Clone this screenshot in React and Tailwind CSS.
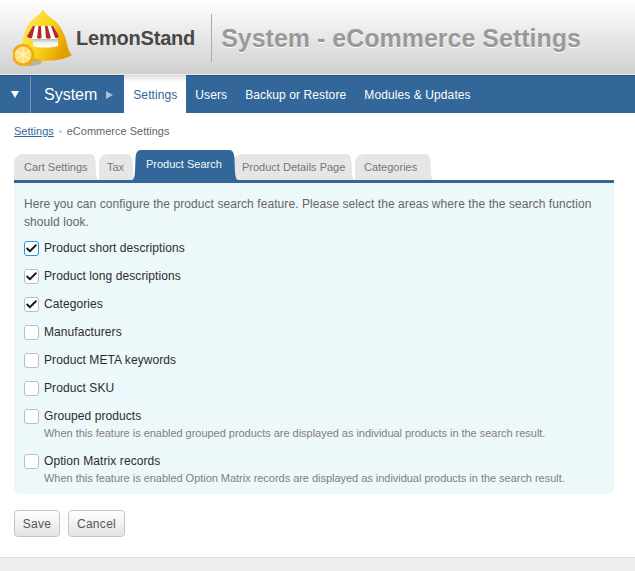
import React from "react";
import { Check } from "lucide-react";

const fields = [
  { label: "Product short descriptions", checked: true, focused: true },
  { label: "Product long descriptions", checked: true },
  { label: "Categories", checked: true },
  { label: "Manufacturers" },
  { label: "Product META keywords" },
  { label: "Product SKU" },
  {
    label: "Grouped products",
    hint: "When this feature is enabled grouped products are displayed as individual products in the search result.",
  },
  {
    label: "Option Matrix records",
    hint: "When this feature is enabled Option Matrix records are displayed as individual products in the search result.",
  },
];

const tabs = [
  { label: "Cart Settings", size: "w-[76px] pl-[10px]" },
  { label: "Tax", size: "w-[28px] pl-[8px]" },
  { label: "Product Search", size: "w-[88px] pl-[5px]", active: true },
  { label: "Product Details Page", size: "w-[113px] pl-[9px]" },
  { label: "Categories", size: "w-[70px] pl-[9px]" },
];

function Logo() {
  return (
    <svg width="62" height="62" viewBox="0 0 62 62" className="shrink-0">
      <defs>
        <linearGradient id="dome" x1="0" y1="0" x2="1" y2="0.5">
          <stop offset="0" stopColor="#ffea66" />
          <stop offset="0.55" stopColor="#fbd41c" />
          <stop offset="1" stopColor="#e2a000" />
        </linearGradient>
        <linearGradient id="shop" x1="0" y1="0" x2="0" y2="1">
          <stop offset="0" stopColor="#8f8f7c" />
          <stop offset="0.6" stopColor="#f2f2ec" />
          <stop offset="1" stopColor="#ffffff" />
        </linearGradient>
      </defs>
      <path d="M30 3 C32 8 37 11 42 15 C48 20 52 29 54 38 C55 44 57 47 59 49 C50 55 30 56 20 54 C12 52 9 48 9 42 C9 32 12 22 19 14 C24 10 28 8 30 3 Z" fill="url(#dome)" />
      <path d="M20 30 H45 V40 C38 42 26 42 20 40 Z" fill="url(#shop)" />
      <path d="M14 30 L20 20 H40 L46 30 L44 33 L16 33 Z" fill="#fff" />
      <path d="M14 30 L20 20 H22 L19 32 C17 33 15 32 14 30 Z M24 32 L25.5 20 H28 L28.5 32 C27 33 25.5 33 24 32 Z M33 32 L32 20 H34.5 L38 32 C36.5 33 34.5 33 33 32 Z M42 31.5 L38 20 H40 L46 30 C45 32 43.5 33 42 31.5 Z" fill="#b3282b" />
      <ellipse cx="16" cy="56" rx="13" ry="4" fill="#a87c10" opacity="0.4" />
      <circle cx="10" cy="49" r="11" fill="#f2a90a" />
      <circle cx="10" cy="49" r="8.5" fill="#fde07a" />
      <path d="M10 49 L10 41 M10 49 L17 45 M10 49 L17 53 M10 49 L10 57 M10 49 L3 53 M10 49 L3 45" stroke="#fff6c8" strokeWidth="1.2" />
    </svg>
  );
}

function TabCap({ side, color, height }) {
  const d =
    side === "right"
      ? `M0 0 C4 0 5 3 5.5 8 C6 ${height - 6} 6 ${height - 1} 9 ${height} H0 Z`
      : `M9 0 C5 0 4 3 3.5 8 C3 ${height - 6} 3 ${height - 1} 0 ${height} H9 Z`;
  return (
    <svg width="9" height={height} viewBox={`0 0 9 ${height}`} className="block shrink-0">
      <path d={d} fill={color} />
    </svg>
  );
}

function Tab({ label, size, active }) {
  if (active) {
    return (
      <div className="relative z-10 -ml-[4px] -mr-[5px] flex items-end">
        <TabCap side="left" color="#336699" height={30} />
        <div className={`flex h-[30px] items-center bg-[#336699] pb-[1px] text-[11px] text-[#f4f8fb] ${size}`}>{label}</div>
        <TabCap side="right" color="#336699" height={30} />
      </div>
    );
  }
  return (
    <div className="flex items-end">
      <div className={`flex h-[26px] items-center rounded-tl-[9px] bg-[#e6e6e6] pt-[1px] text-[11px] text-[#777] ${size}`}>{label}</div>
      <TabCap side="right" color="#e6e6e6" height={26} />
    </div>
  );
}

function Field({ label, hint, checked, focused }) {
  return (
    <div className="flex flex-col">
      <label className="flex h-[14px] items-center">
        <span
          className={`flex h-[15px] w-[15px] items-center justify-center rounded-[3px] border bg-white ${
            focused ? "border-[#1c9fd8]" : "border-[#b9bfc1]"
          }`}
        >
          {checked && <Check size={13} strokeWidth={3.5} color="#1a1a1a" />}
        </span>
        <span className="ml-[5px] text-[12px] tracking-[0.08px] text-[#2c2c2c]">{label}</span>
      </label>
      {hint && <p className="mt-[4px] ml-[20px] text-[11px] leading-[13px] tracking-[-0.03px] text-[#808080]">{hint}</p>}
    </div>
  );
}

export default function App() {
  return (
    <div className="flex h-[571px] flex-col overflow-hidden bg-white font-['Liberation_Sans',Arial,sans-serif]">
      <header className="flex h-[75px] shrink-0 items-center border-b border-[#ececec] bg-gradient-to-b from-white to-[#d0d0d0] pl-[13px]">
        <Logo />
        <span className="ml-[1px] mt-[2px] text-[20px] font-bold tracking-[-0.2px] text-[#484848]">LemonStand</span>
        <div className="ml-[16px] mt-[1px] h-[48px] w-[1px] bg-[#aaa]" />
        <h1 className="ml-[9px] mt-[4px] text-[25px] font-bold text-[#999] [text-shadow:0_1px_0_#fff]">System - eCommerce Settings</h1>
      </header>

      <nav className="flex h-[38px] shrink-0 items-stretch border-t border-[#27517c] bg-[#336699] pb-0 text-[12px] tracking-[0.1px] text-white">
        <div className="flex w-[31px] items-center justify-center border-r border-[#6e95bb] pr-[1px]">
          <div className="h-0 w-0 border-x-[4px] border-t-[7px] border-x-transparent border-t-white" />
        </div>
        <div className="ml-[13px] flex items-center pt-[1px] text-[16px] tracking-normal">System</div>
        <div className="ml-[9px] mr-[11px] flex items-center">
          <div className="h-0 w-0 border-y-[4px] border-l-[7px] border-y-transparent border-l-[#a9c2da]" />
        </div>
        <div className="-mt-[1px] flex w-[62px] items-center justify-center bg-gradient-to-b from-[#dcdcdc] from-0% via-white via-[18%] to-white pt-[2px] text-[#336699]">Settings</div>
        <div className="ml-[9px] flex items-center pt-[1px]">Users</div>
        <div className="ml-[18px] flex items-center pt-[1px]">Backup or Restore</div>
        <div className="ml-[18px] flex items-center pt-[1px]">Modules &amp; Updates</div>
      </nav>

      <main className="flex flex-1 flex-col px-[14px]">
        <div className="mt-[11px] flex h-[14px] items-center text-[11px] text-[#666]">
          <a className="text-[#336699] underline">Settings</a>
          <span className="mx-[5px] h-[3px] w-[3px] rounded-full bg-[#ccc]" />
          <span>eCommerce Settings</span>
        </div>

        <div className="mt-[12px] flex h-[30px] items-end">
          {tabs.map((t) => (
            <Tab key={t.label} {...t} />
          ))}
        </div>

        <section className="w-[600px] rounded-b-[6px] border-t-[3px] border-[#336699] bg-[#ecf8f9] px-[10px] pt-[12px] pb-[9px]">
          <p className="text-[12px] leading-[18px] tracking-[0.075px] text-[#666]">
            Here you can configure the product search feature. Please select the areas where the the search function should look.
          </p>
          <div className="mt-[10px] flex flex-col gap-[14px]">
            {fields.map((f) => (
              <Field key={f.label} {...f} />
            ))}
          </div>
        </section>

        <div className="mt-[16px] flex gap-[8px]">
          <button className="h-[27px] w-[46px] rounded-[4px] border border-[#c4c4c4] bg-gradient-to-b from-white to-[#e4e4e4] text-[12px] tracking-[0.3px] text-[#555]">Save</button>
          <button className="h-[27px] w-[57px] rounded-[4px] border border-[#c4c4c4] bg-gradient-to-b from-white to-[#e4e4e4] text-[12px] tracking-[0.3px] text-[#555]">Cancel</button>
        </div>
      </main>

      <footer className="h-[14px] shrink-0 border-t border-[#ddd] bg-[#eeeeee]" />
    </div>
  );
}
